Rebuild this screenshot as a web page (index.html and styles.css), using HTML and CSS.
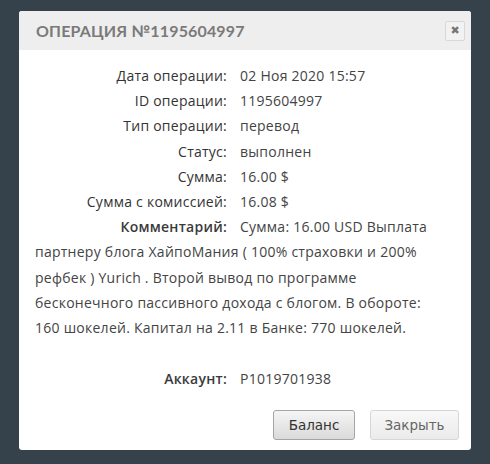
FILE: index.html
```html
<!DOCTYPE html>
<html lang="ru">
<head>
<meta charset="utf-8">
<link rel="stylesheet" href="styles.css">
</head>
<body>
<div class="dialog">
  <div class="dialog-head">
    <span class="dialog-title">Операция №1195604997</span>
    <button class="close-btn" aria-label="Закрыть">✖</button>
  </div>
  <div class="dialog-body">
    <div class="row"><span class="lbl">Дата операции:</span><span class="val">02 Ноя 2020 15:57</span></div>
    <div class="row"><span class="lbl">ID операции:</span><span class="val">1195604997</span></div>
    <div class="row"><span class="lbl">Тип операции:</span><span class="val">перевод</span></div>
    <div class="row"><span class="lbl">Статус:</span><span class="val">выполнен</span></div>
    <div class="row"><span class="lbl">Сумма:</span><span class="val">16.00 $</span></div>
    <div class="row"><span class="lbl">Сумма с комиссией:</span><span class="val">16.08 $</span></div>
    <div class="row"><span class="lbl strong">Комментарий:</span><span class="val">Сумма: 16.00 USD Выплата</span></div>
    <p class="comment-rest">партнеру блога ХайпоМания ( 100% страховки и 200%<br>рефбек ) Yurich . Второй вывод по программе<br>бесконечного пассивного дохода с блогом. В обороте:<br>160 шокелей. Капитал на 2.11 в Банке: 770 шокелей.</p>
    <div class="row account"><span class="lbl strong">Аккаунт:</span><span class="val">P1019701938</span></div>
  </div>
  <div class="dialog-foot">
    <button class="btn btn-primary">Баланс</button>
    <button class="btn btn-light">Закрыть</button>
  </div>
</div>
</body>
</html>
```

FILE: styles.css
```css
html, body {
  margin: 0;
  padding: 0;
  background: #36424b;
  width: 490px;
  height: 464px;
  overflow: hidden;
}
body {
  padding: 11px 19px 0 19px;
  box-sizing: border-box;
  font-family: "Open Sans", "Liberation Sans", sans-serif;
}
.dialog {
  width: 452px;
  height: 439px;
  background: #fff;
  border-radius: 3px;
  overflow: hidden;
  display: flex;
  flex-direction: column;
}
.dialog-head {
  height: 39px;
  flex: none;
  background: #eeeeee;
  display: flex;
  align-items: center;
  justify-content: space-between;
  padding: 0 6px 0 17px;
}
.dialog-title {
  font-family: "Lato", "Open Sans", sans-serif;
  font-weight: 700;
  text-transform: uppercase;
  color: #7a7a7a;
  font-size: 16px;
  letter-spacing: 0.15px;
}
.close-btn {
  width: 20px;
  height: 20px;
  padding: 0;
  border: 1px solid #d8d8d8;
  background: #f2f2f2;
  border-radius: 2px;
  color: #777;
  font-size: 11px;
  line-height: 18px;
  text-align: center;
  font-family: "DejaVu Sans", sans-serif;
}
.dialog-body {
  padding: 13px 8px 0 16px;
  font-size: 14px;
  letter-spacing: 0.25px;
  color: #444;
  white-space: nowrap;
}
.row {
  line-height: 25.2px;
}
.comment-rest {
  margin: 0;
  line-height: 25.2px;
}
.lbl {
  display: inline-block;
  width: 192px;
  text-align: right;
  margin-right: 13px;
  color: #333;
}
.lbl.strong {
  font-weight: 600;
  color: #3a3a3a;
}
.account {
  margin-top: 26px;
}
.dialog-foot {
  display: flex;
  justify-content: flex-end;
  gap: 15px;
  padding: 19px 12px 0 0;
}
.btn {
  height: 30px;
  border-radius: 3px;
  font-family: "DejaVu Sans", "Liberation Sans", sans-serif;
  font-size: 13.5px;
  padding: 0;
}
.btn-primary {
  width: 82px;
  border: 1px solid #a5a5a5;
  background: linear-gradient(#f5f5f5, #dadada);
  color: #333;
}
.btn-light {
  width: 89px;
  border: 1px solid #d6d6d6;
  background: linear-gradient(#f8f8f8, #ebebeb);
  color: #666;
}
```
